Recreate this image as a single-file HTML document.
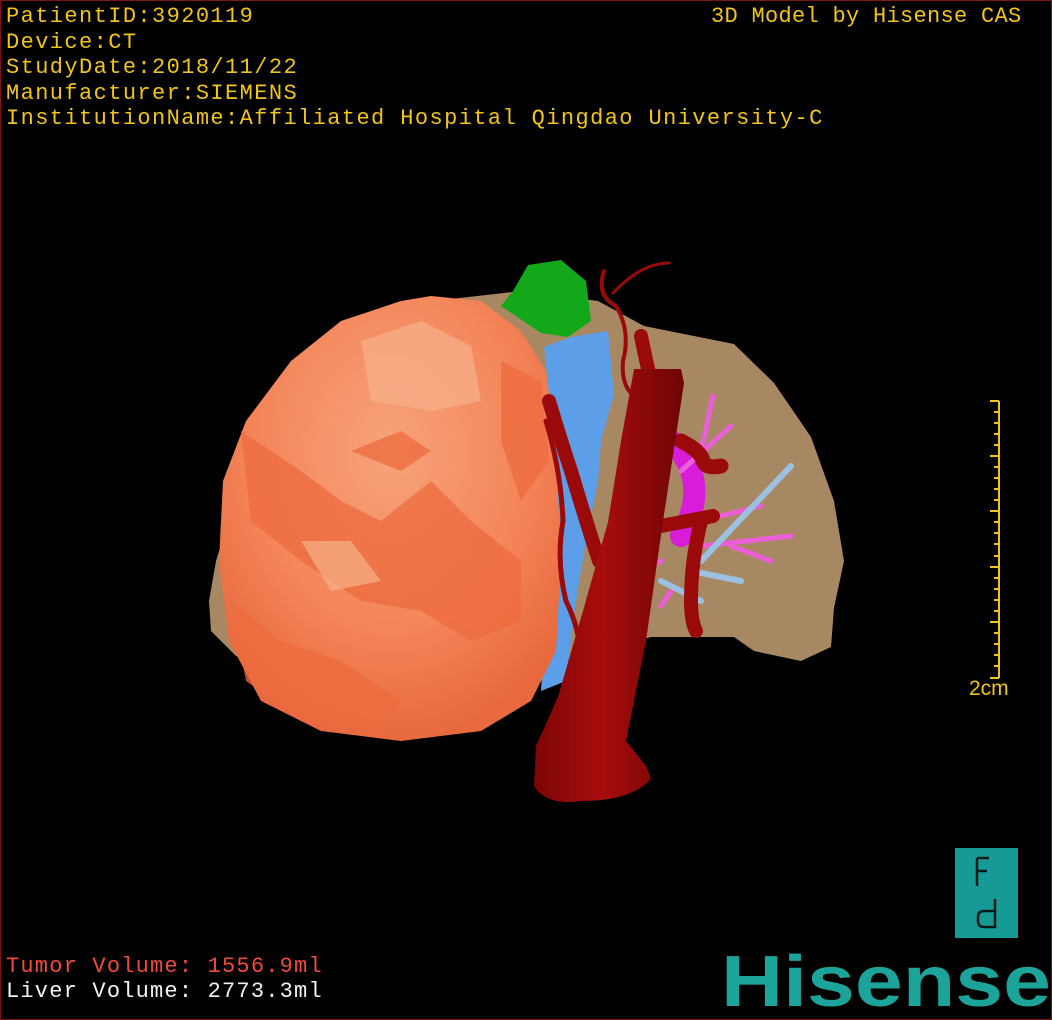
<!DOCTYPE html>
<html><head><meta charset="utf-8"><style>
html,body{margin:0;padding:0;background:#000;}
#w{position:relative;width:1050px;height:1018px;border:1px solid #7a1616;overflow:hidden;background:#000;font-family:"Liberation Mono","Noto Sans CJK SC",monospace;}
.t{position:absolute;color:#f0c419;font-size:22px;line-height:25.5px;white-space:pre;letter-spacing:1.4px;}
</style></head><body><div id="w">
<div class="t" style="left:5px;top:3px">PatientID:3920119
Device:CT
StudyDate:2018/11/22
Manufacturer:SIEMENS
InstitutionName:Affiliated Hospital Qingdao University-C</div>
<div class="t" style="left:710px;top:3px;letter-spacing:0.3px">3D Model by Hisense CAS</div>
<div class="t" style="left:5px;top:953px;color:#ef4b3c;letter-spacing:1.2px">Tumor Volume: 1556.9ml</div>
<div class="t" style="left:5px;top:978px;color:#f3f3f3;letter-spacing:1.2px">Liver Volume: 2773.3ml</div>
<div class="t" style="left:968px;top:675px;font-family:'Liberation Sans',sans-serif;font-size:21px;letter-spacing:0">2cm</div>
<svg width="1050" height="1018" style="position:absolute;left:0;top:0">
<defs>
<radialGradient id="tg" cx="0.5" cy="0.35" r="0.65"><stop offset="0" stop-color="#f7a27a"/><stop offset="0.6" stop-color="#f4865a"/><stop offset="1" stop-color="#e8693e"/></radialGradient>
<linearGradient id="ag" x1="0" x2="1"><stop offset="0" stop-color="#7d0505"/><stop offset="0.45" stop-color="#a80d0d"/><stop offset="1" stop-color="#6e0404"/></linearGradient>
</defs>
<path d="M208,600 L215,560 L240,480 L300,400 L380,330 L450,298 L520,290 L597,300 L643,325 L733,343 L773,382 L810,436 L833,500 L843,560 L833,607 L830,646 L800,660 L753,650 L733,636 L650,636 L560,660 L420,690 L300,680 L235,655 L210,630 Z" fill="#a88862"/>
<path d="M500,305 L512,290 L527,264 L560,259 L585,280 L590,320 L567,336 L540,332 Z" fill="#12a81a"/>
<path d="M543,346 L570,336 L607,330 L613,393 L600,440 L597,480 L585,540 L575,600 L565,680 L540,690 L545,600 L550,520 L552,430 Z" fill="#5c9fe8"/>
<g stroke-linecap="round" fill="none">
<path d="M640,420 Q680,440 690,470 Q700,500 680,535" stroke="#d81cd8" stroke-width="22"/>
<path d="M680,470 L730,425 M700,450 L712,395 M700,520 L760,505 M700,545 L790,535 M730,545 L770,560 M660,560 L620,580 M670,590 L660,605" stroke="#ea5fd8" stroke-width="5"/>
<path d="M700,560 L790,465 M690,570 L740,580 M660,580 L700,600" stroke="#9cc0e0" stroke-width="6"/>
</g>
<path d="M340,320 L400,300 L430,295 L480,300 L520,330 L545,370 L555,450 L560,560 L555,650 L530,700 L480,730 L400,740 L320,730 L260,700 L228,640 L218,560 L222,480 L245,420 L290,360 Z" fill="url(#tg)"/>
<g fill="#ee6b3f" opacity="0.75">
<path d="M240,430 L300,470 L340,500 L380,520 L430,480 L470,520 L520,560 L520,620 L470,640 L420,610 L360,600 L300,560 L250,520 Z"/>
<path d="M350,450 L400,430 L430,450 L400,470 Z"/>
<path d="M230,600 L280,640 L340,660 L400,700 L380,730 L300,720 L245,680 Z"/>
<path d="M500,360 L540,380 L548,460 L520,500 L500,440 Z"/>
</g>
<g fill="#f7b08a" opacity="0.7">
<path d="M360,340 L420,320 L470,345 L480,400 L430,410 L370,400 Z"/>
<path d="M300,540 L350,540 L380,580 L330,590 Z"/>
</g>
<g fill="none" stroke="#9a0a0a" stroke-linecap="round">
<path d="M603,270 Q595,295 615,305 Q630,330 622,360 Q620,385 633,395" stroke-width="4"/>
<path d="M612,292 Q640,262 668,262" stroke-width="3"/>
<path d="M548,400 Q560,440 570,470 Q585,520 598,560" stroke-width="14"/>
<path d="M545,420 Q560,470 562,520 Q555,560 565,600 Q575,620 578,640" stroke-width="5"/>
<path d="M640,335 Q645,360 650,380" stroke-width="14"/>
<path d="M680,440 Q700,450 702,460 Q705,468 720,465" stroke-width="15"/>
<path d="M700,520 Q690,560 690,600 Q690,620 695,630" stroke-width="14"/>
<path d="M660,525 L712,515" stroke-width="14"/>
</g>
<path d="M633,368 L680,368 L683,382 L662,520 L645,640 L625,740 L645,765 L650,778 Q630,800 580,800 Q545,805 533,785 L535,745 L557,696 L582,610 L607,521 L620,440 Z" fill="url(#ag)"/>
<g stroke="#f0c419" stroke-width="2">
<line x1="998" y1="400" x2="998" y2="677"/>
<line x1="989" y1="400" x2="998" y2="400"/><line x1="989" y1="677" x2="998" y2="677"/>
<line x1="989" y1="455" x2="998" y2="455"/><line x1="989" y1="510" x2="998" y2="510"/><line x1="989" y1="566" x2="998" y2="566"/><line x1="989" y1="621" x2="998" y2="621"/>
<path d="M993,411h5M993,422h5M993,433h5M993,444h5M993,466h5M993,477h5M993,488h5M993,499h5M993,521h5M993,532h5M993,543h5M993,555h5M993,577h5M993,588h5M993,599h5M993,610h5M993,632h5M993,643h5M993,654h5M993,665h5"/>
</g>
<rect x="954" y="847" width="63" height="90" fill="#169a96"/>
<path d="M976,857 V885 M976,857 H988 M976,870 H986" stroke="#0a1a1a" stroke-width="2.5" fill="none"/>
<path d="M994,898 V926 H983 Q977,926 977,920 V916 Q977,910 983,910 H994" stroke="#0a1a1a" stroke-width="2.5" fill="none"/>
<text x="720" y="1005" font-family="Liberation Sans,sans-serif" font-weight="bold" font-size="72" fill="#1ca39a" textLength="330" lengthAdjust="spacingAndGlyphs">Hisense</text>
</svg>
</div></body></html>
